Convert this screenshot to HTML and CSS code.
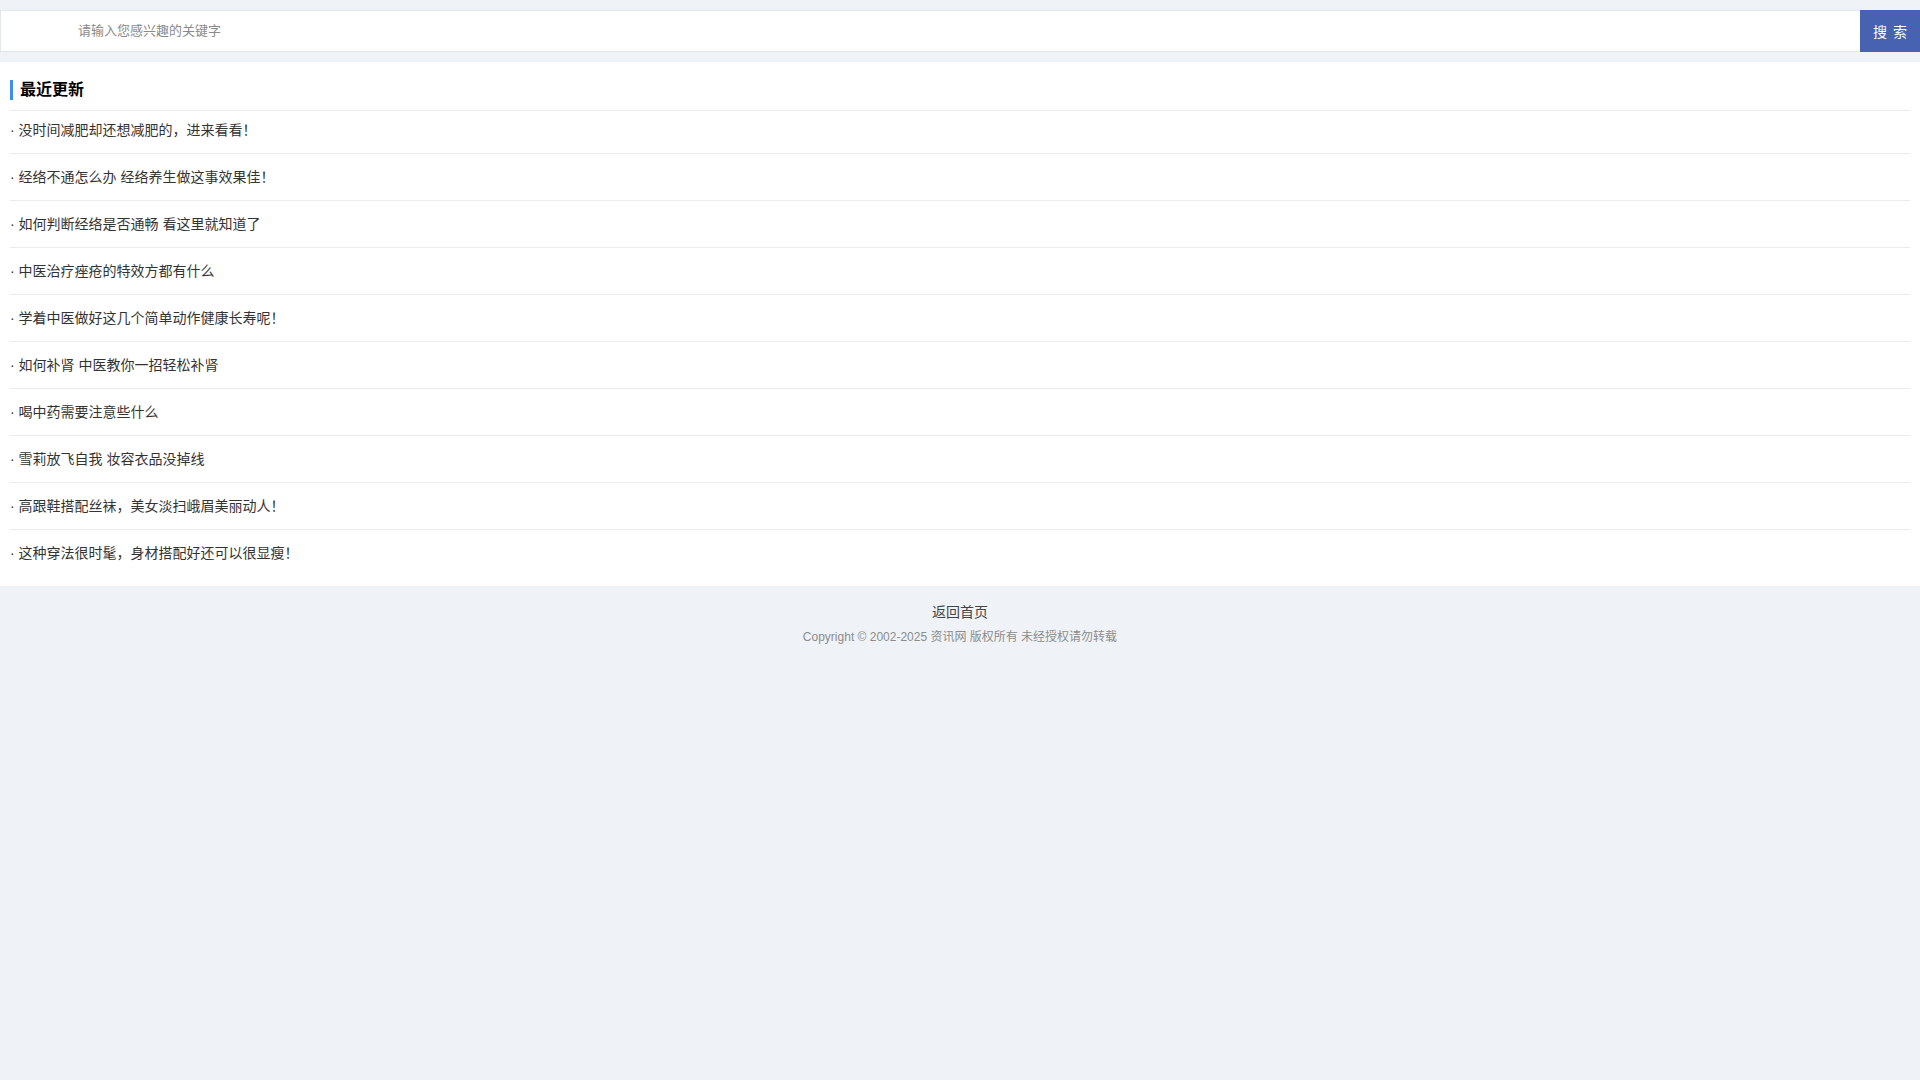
FILE: index.html
```html
<!DOCTYPE html>
<html lang="zh-CN">
<head>
<meta charset="utf-8">
<title>最近更新</title>
<link rel="stylesheet" href="styles.css">
</head>
<body>
<div class="search">
  <input class="search-input" type="text" placeholder="请输入您感兴趣的关键字">
  <button class="search-btn" type="button">搜 索</button>
</div>
<div class="main">
  <div class="title-bar"><h2 class="title">最近更新</h2></div>
  <ul class="list">
    <li class="item">· 没时间减肥却还想减肥的，进来看看！</li>
    <li class="item">· 经络不通怎么办 经络养生做这事效果佳！</li>
    <li class="item">· 如何判断经络是否通畅 看这里就知道了</li>
    <li class="item">· 中医治疗痤疮的特效方都有什么</li>
    <li class="item">· 学着中医做好这几个简单动作健康长寿呢！</li>
    <li class="item">· 如何补肾 中医教你一招轻松补肾</li>
    <li class="item">· 喝中药需要注意些什么</li>
    <li class="item">· 雪莉放飞自我 妆容衣品没掉线</li>
    <li class="item">· 高跟鞋搭配丝袜，美女淡扫峨眉美丽动人！</li>
    <li class="item">· 这种穿法很时髦，身材搭配好还可以很显瘦！</li>
  </ul>
</div>
<div class="footer">
  <div class="home-link">返回首页</div>
  <div class="copyright">Copyright © 2002-2025 资讯网 版权所有 未经授权请勿转载</div>
</div>
</body>
</html>
```

FILE: styles.css
```css
html, body {
  margin: 0;
  padding: 0;
  background: #eff3f7;
  font-family: "Liberation Sans", "Noto Sans CJK SC", sans-serif;
  color: #333;
}

.search {
  display: flex;
  padding: 10px 0;
}

.search-input {
  flex: 1;
  box-sizing: border-box;
  height: 42px;
  margin: 0;
  border: 1px solid #e3e6ea;
  border-right: none;
  background: #fff;
  padding: 0 0 1px 77px;
  font-family: "Liberation Sans", "Noto Sans CJK SC", sans-serif;
  font-size: 13px;
  color: #333;
  outline: none;
}

.search-input::placeholder {
  color: #8a8a8a;
}

.search-btn {
  width: 60px;
  height: 42px;
  margin: 0;
  border: none;
  background: #4662b0;
  color: #fff;
  font-family: "Liberation Sans", "Noto Sans CJK SC", sans-serif;
  font-size: 14px;
  letter-spacing: 1px;
  padding: 0 0 0 1px;
}

.main {
  background: #fff;
  padding: 0 10px 10px;
}

.title-bar {
  padding: 18px 0 10px;
  border-bottom: 1px solid #ececec;
}

.title {
  margin: 0;
  border-left: 3px solid #3b8fea;
  padding-left: 7px;
  font-size: 16px;
  line-height: 20px;
  font-weight: bold;
  color: #000;
}

.list {
  list-style: none;
  margin: 0;
  padding: 0;
}

.item {
  padding: 12px 0;
  line-height: 22px;
  font-size: 14px;
  color: #333;
  border-bottom: 1px solid #ececec;
}

.item:first-child {
  padding-top: 8px;
}

.item:last-child {
  border-bottom: none;
}

.footer {
  padding: 14px 0 20px;
  text-align: center;
}

.home-link {
  font-size: 14px;
  line-height: 24px;
  color: #444;
}

.copyright {
  margin-top: 4px;
  font-size: 12px;
  line-height: 18px;
  color: #8c8c8c;
}
```
